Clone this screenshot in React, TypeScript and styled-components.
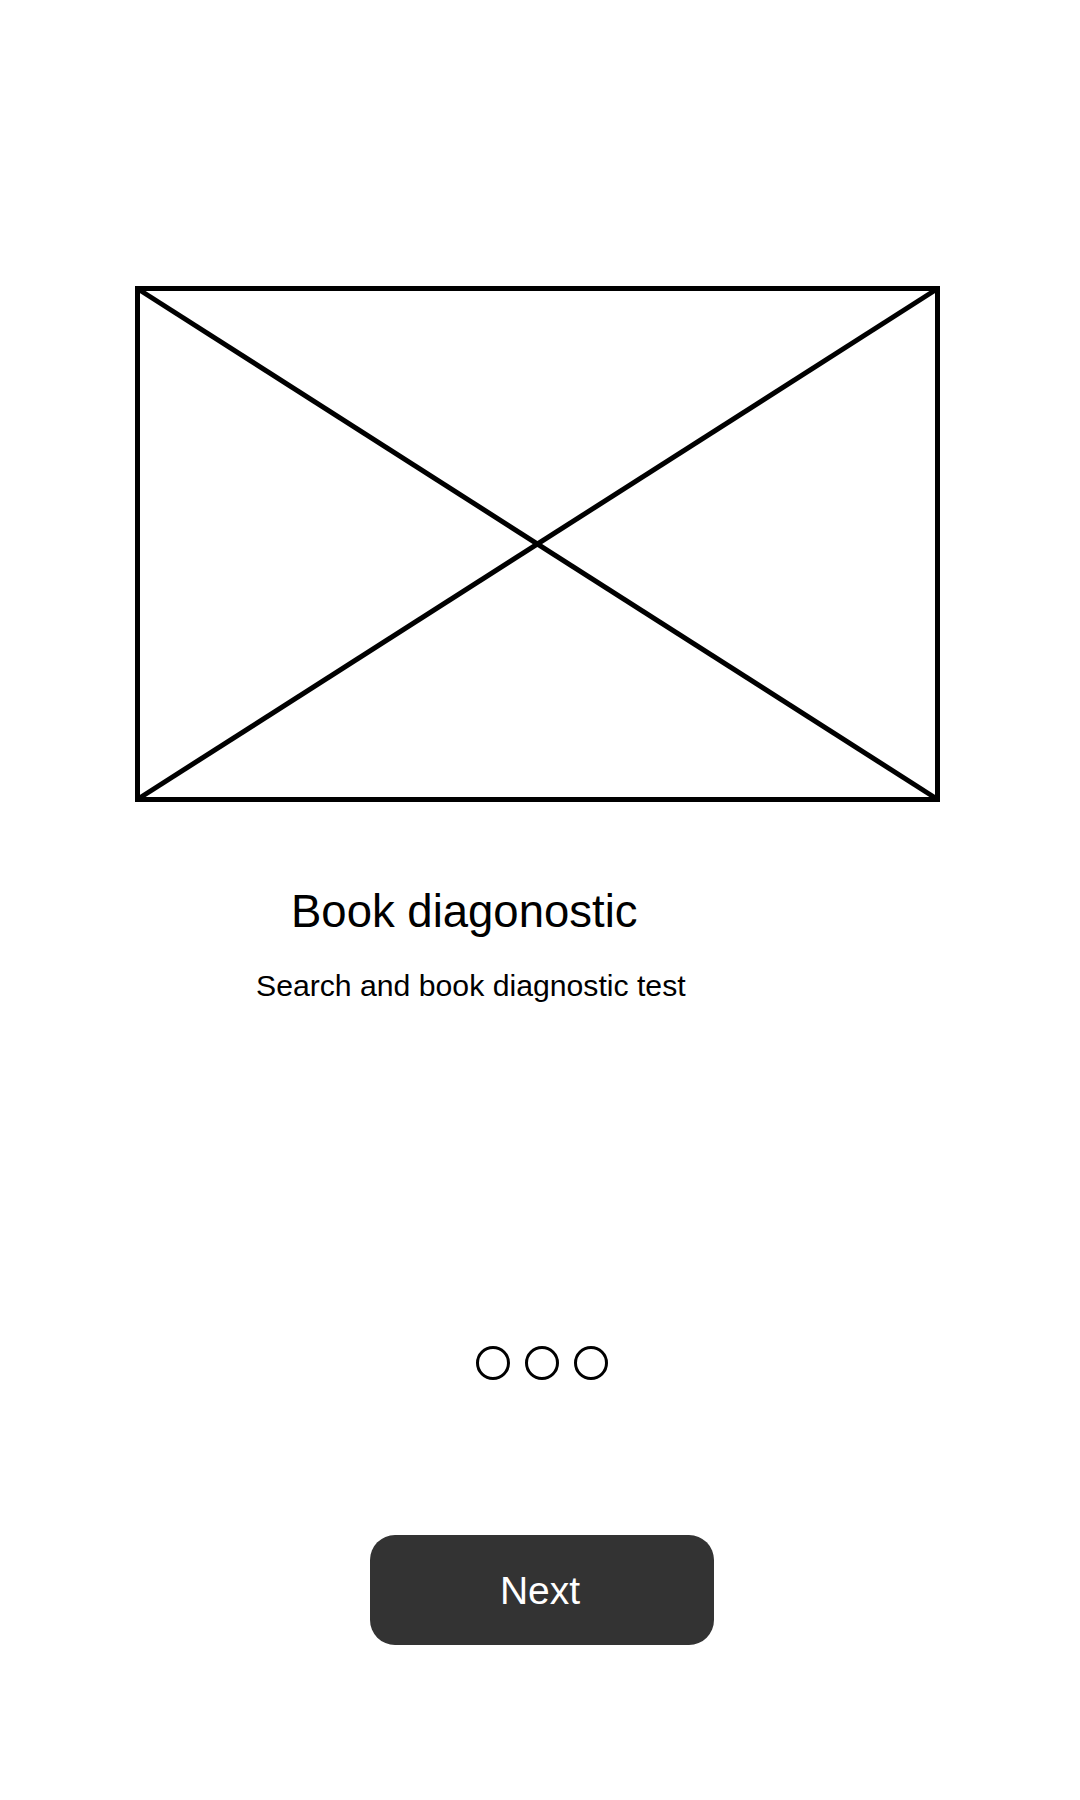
import React from "react";
import styled, { createGlobalStyle } from "styled-components";

const GlobalStyle = createGlobalStyle`
  html, body {
    margin: 0;
    padding: 0;
    background: #ffffff;
  }
  body {
    font-family: "Liberation Sans", Arial, sans-serif;
    color: #000000;
  }
`;

const Screen = styled.main`
  width: 1080px;
  min-height: 1800px;
  box-sizing: border-box;
  padding-top: 286px;
  display: flex;
  flex-direction: column;
  background: #ffffff;
`;

const Placeholder = styled.svg`
  display: block;
  margin-left: 135px;
  width: 805px;
  height: 516px;
`;

const Title = styled.h1`
  margin: 84px 0 0 291px;
  font-size: 45.5px;
  line-height: 52px;
  font-weight: 400;
  color: #000;
`;

const Subtitle = styled.p`
  margin: 30px 0 0 256px;
  font-size: 30.2px;
  line-height: 36px;
  color: #000;
`;

const Dots = styled.div`
  margin-top: 342px;
  align-self: center;
  margin-left: 3px;
  display: flex;
  gap: 15px;
`;

const Dot = styled.span<{ $active?: boolean }>`
  display: block;
  width: 34px;
  height: 34px;
  box-sizing: border-box;
  border-radius: 50%;
  border: 3.5px solid #000;
  background: ${(p) => (p.$active ? "#000" : "transparent")};
`;

const NextButton = styled.button`
  margin-top: 155px;
  align-self: center;
  margin-left: 4px;
  width: 344px;
  height: 110px;
  box-sizing: border-box;
  padding: 0 4px 0 0;
  border: none;
  border-radius: 25px;
  background: #333333;
  color: #ffffff;
  font-family: "Liberation Sans", Arial, sans-serif;
  font-size: 39px;
  line-height: 1;
  cursor: pointer;
`;

export default function App() {
  return (
    <>
      <GlobalStyle />
      <Screen>
        <Placeholder viewBox="0 0 805 516" aria-hidden="true">
          <rect
            x="2.5"
            y="2.5"
            width="800"
            height="511"
            fill="none"
            stroke="#000"
            strokeWidth="5"
          />
          <line x1="3" y1="3" x2="802" y2="513" stroke="#000" strokeWidth="5" />
          <line x1="802" y1="3" x2="3" y2="513" stroke="#000" strokeWidth="5" />
        </Placeholder>
        <Title>Book diagonostic</Title>
        <Subtitle>Search and book diagnostic test</Subtitle>
        <Dots>
          <Dot />
          <Dot />
          <Dot />
        </Dots>
        <NextButton type="button">Next</NextButton>
      </Screen>
    </>
  );
}
